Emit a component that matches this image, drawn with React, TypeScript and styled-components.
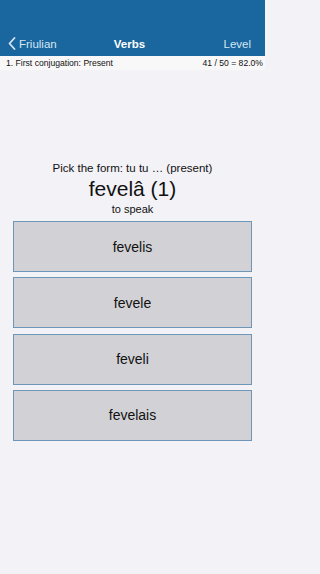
import React from 'react'
import styled, { createGlobalStyle } from 'styled-components'

const GlobalStyle = createGlobalStyle`
  html, body {
    margin: 0;
    padding: 0;
    background: #f2f2f7;
    font-family: 'Liberation Sans', Arial, sans-serif;
  }
`

const Screen = styled.div`
  width: 265px;
  height: 574px;
  display: flex;
  flex-direction: column;
  background: #f2f2f7;
`

const NavBar = styled.header`
  height: 56px;
  background: #1a669e;
  display: grid;
  grid-template-columns: 1fr auto 1fr;
  align-items: end;
  padding: 0 14px 6px 8px;
  box-sizing: border-box;
  color: #fff;
`

const BackButton = styled.div`
  display: flex;
  align-items: center;
  gap: 3px;
  color: #d6e6f3;
  font-size: 11.5px;
`

const Title = styled.div`
  font-size: 11.5px;
  font-weight: bold;
  text-align: center;
`

const NavAction = styled.div`
  font-size: 11.5px;
  text-align: right;
  color: #d6e6f3;
`

const StatusRow = styled.div`
  height: 14px;
  display: flex;
  justify-content: space-between;
  align-items: center;
  padding: 0 2px 0 6px;
  background: #f8f8f8;
  font-size: 8.6px;
  color: #111;
`

const Body = styled.main`
  display: flex;
  flex-direction: column;
  align-items: center;
  padding-top: 91px;
`

const Prompt = styled.div`
  font-size: 11.5px;
  color: #111;
  line-height: 14px;
`

const Word = styled.div`
  font-size: 21px;
  color: #111;
  line-height: 28px;
`

const Meaning = styled.div`
  font-size: 11px;
  color: #111;
  line-height: 12px;
`

const Options = styled.div`
  display: flex;
  flex-direction: column;
  gap: 5.3px;
  margin-top: 6px;
  width: 239px;
`

const Option = styled.button`
  height: 51px;
  box-sizing: border-box;
  background: #d2d2d6;
  border: 1px solid #6e96b8;
  font-family: inherit;
  font-size: 14px;
  color: #111;
  padding: 0;
`

const Chevron = () => (
  <svg width="8" height="13" viewBox="0 0 8 13">
    <path d="M6.5 1 L1.5 6.5 L6.5 12" fill="none" stroke="#d6e6f3" strokeWidth="1.8" strokeLinecap="round" strokeLinejoin="round" />
  </svg>
)

const choices = ['fevelis', 'fevele', 'feveli', 'fevelais']

export default function App() {
  return (
    <Screen>
      <GlobalStyle />
      <NavBar>
        <BackButton>
          <Chevron />
          Friulian
        </BackButton>
        <Title>Verbs</Title>
        <NavAction>Level</NavAction>
      </NavBar>
      <StatusRow>
        <span>1. First conjugation: Present</span>
        <span>41 / 50 = 82.0%</span>
      </StatusRow>
      <Body>
        <Prompt>Pick the form: tu tu … (present)</Prompt>
        <Word>fevelâ (1)</Word>
        <Meaning>to speak</Meaning>
        <Options>
          {choices.map(c => (
            <Option key={c}>{c}</Option>
          ))}
        </Options>
      </Body>
    </Screen>
  )
}
